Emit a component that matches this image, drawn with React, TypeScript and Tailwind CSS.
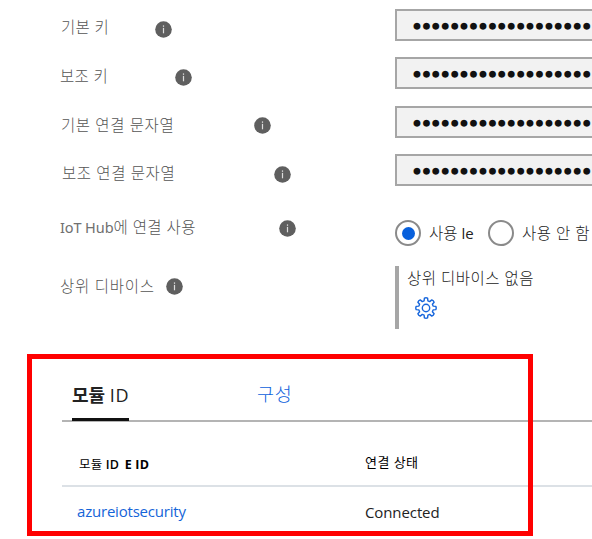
import React from "react";

const DOTS = "●".repeat(19);

function Info() {
  return (
    <svg className="size-[17px] shrink-0" viewBox="0 0 17 17" aria-hidden="true">
      <circle cx="8.5" cy="8.5" r="8.3" fill="#5f5f5f" />
      <rect x="7.9" y="4.4" width="1.2" height="1.4" fill="#ddd" />
      <rect x="7.9" y="6.9" width="1.2" height="5.4" fill="#ddd" />
    </svg>
  );
}

type FieldProps = { label: React.ReactNode; row: string; text: string; icon: string; children: React.ReactNode };

function Field({ label, row, text, icon, children }: FieldProps) {
  return (
    <div className={`flex items-start ${row}`}>
      <div className="flex w-[395px] shrink-0 items-start">
        <div className={`shrink-0 whitespace-nowrap text-[15.5px] leading-[20px] text-[#555] ${text}`}>{label}</div>
        <div className={icon}>
          <Info />
        </div>
      </div>
      {children}
    </div>
  );
}

function Secret({ className }: { className: string }) {
  return (
    <div className={`w-[210px] shrink-0 border-2 border-[#a6a6a6] bg-[#f2f2f2] pl-[16.5px] ${className}`}>
      <div className="pt-px whitespace-nowrap font-['DejaVu_Sans_Mono',monospace] text-[11.5px] leading-[27px] tracking-[2.5px] text-[#111]">
        {DOTS.slice(1)}
        <span className="tracking-normal">●</span>
      </div>
    </div>
  );
}

function Gear() {
  return (
    <svg className="size-[22px]" viewBox="-11 -11 22 22" fill="none" stroke="#1766dc" strokeWidth="1.4" strokeLinejoin="round" aria-hidden="true">
      <path d="M-1.9-7.1-1.6-9.8Q0-10.6 1.6-9.8L1.9-7.1 3.7-6.4 5.8-8.1Q7.5-7.5 8.1-5.8L6.4-3.7 7.1-1.9 9.8-1.6Q10.6 0 9.8 1.6L7.1 1.9 6.4 3.7 8.1 5.8Q7.5 7.5 5.8 8.1L3.7 6.4 1.9 7.1 1.6 9.8Q0 10.6-1.6 9.8L-1.9 7.1-3.7 6.4-5.8 8.1Q-7.5 7.5-8.1 5.8L-6.4 3.7-7.1 1.9-9.8 1.6Q-10.6 0-9.8-1.6L-7.1-1.9-6.4-3.7-8.1-5.8Q-7.5-7.5-5.8-8.1L-3.7-6.4Z" />
      <circle r="3.7" />
    </svg>
  );
}

export default function App() {
  return (
    <div className="relative h-[539px] w-[592px] overflow-hidden bg-white font-['Open_Sans','Noto_Sans_CJK_KR',sans-serif] text-[#222]">
      <div className="font-light">
        <Field label="기본 키" row="h-[57px]" text="ml-[61px] mt-[17px] w-[94px] tracking-[0.35px]" icon="mt-[21px]">
          <Secret className="mt-[9px]" />
        </Field>
        <Field label="보조 키" row="h-[48px]" text="ml-[60px] mt-[9px] w-[115px] tracking-[0.35px]" icon="mt-[12px]">
          <Secret className="" />
        </Field>
        <Field label="기본 연결 문자열" row="h-[48px]" text="ml-[61px] mt-[10px] w-[193px] tracking-[0.6px]" icon="mt-[12px]">
          <Secret className="mt-px" />
        </Field>
        <Field label="보조 연결 문자열" row="h-[66px]" text="ml-[62px] mt-[10px] w-[212px] tracking-[0.6px]" icon="mt-[13px]">
          <Secret className="mt-px" />
        </Field>
        <Field
          label={
            <>
              <span className="font-['Noto_Sans'] text-[14.5px] font-normal tracking-[-0.1px] text-[#707070]">IoT Hub</span>에 연결 사용
            </>
          }
          row="h-[47px]"
          text="ml-[60px] mt-[-2px] w-[219px] tracking-[0.45px]"
          icon="mt-[1px]"
        >
          <div className="flex shrink-0 items-center whitespace-nowrap text-[15.5px] leading-[27px]">
            <span className="flex size-[26px] items-center justify-center rounded-full border-2 border-[#8a8a8a]">
              <span className="size-[13px] rounded-full bg-[#0860dc]" />
            </span>
            <span className="ml-[8px] mt-px w-[51px]">
              사용 <span className="text-[15px] font-normal">le</span>
            </span>
            <span className="ml-[8px] size-[26px] rounded-full border-2 border-[#8a8a8a]" />
            <span className="ml-[8px] mt-px tracking-[0.5px]">사용 안 함</span>
          </div>
        </Field>
        <Field label="상위 디바이스" row="h-[88px]" text="ml-[60px] mt-[10px] w-[106px] tracking-[0.75px]" icon="mt-[12px]">
          <div className="h-[63px] border-l-4 border-[#a6a6a6] pl-[8px]">
            <div className="mt-[2px] whitespace-nowrap text-[15.5px] leading-[20px] tracking-[0.5px]">상위 디바이스 없음</div>
            <div className="ml-[8px] mt-[9px]">
              <Gear />
            </div>
          </div>
        </Field>
      </div>

      <div className="ml-[62px] mt-[20px]">
        <div className="flex h-[48px] items-start border-b-2 border-[#b4b4b4] text-[18px] leading-[26px]">
          <div className="ml-[10px] h-[47px] w-[57px] whitespace-nowrap border-b-3 border-[#111] pt-[8px]">
            <span className="font-bold">모듈</span> <span className="tracking-[0.6px]">ID</span>
          </div>
          <div className="ml-[128px] pt-[7px] text-[18.5px] tracking-[0.7px] font-light text-[#0c5fdc]">구성</div>
        </div>
        <div className="flex h-[65px] items-start border-b-2 border-[#dce1e6] text-[12.5px] leading-[18px] text-black">
          <div className="ml-[17px] mt-[34px] w-[286px] whitespace-nowrap tracking-[0.2px]">
            모듈 <span className="font-semibold">ID</span> <span className="ml-[2px] font-bold">E ID</span>
          </div>
          <div className="mt-[31px] text-[13px] tracking-[0.45px]">연결 상태</div>
        </div>
        <div className="flex text-[15px] leading-[20px]">
          <div className="ml-[15px] mt-[14px] w-[288px] tracking-[-0.2px] text-[#1464d8]">azureiotsecurity</div>
          <div className="mt-[15px] tracking-[-0.1px]">Connected</div>
        </div>
      </div>

      <div className="pointer-events-none absolute left-[27px] top-[354px] h-[182px] w-[506px] border-5 border-[#ff0000]" />
    </div>
  );
}
